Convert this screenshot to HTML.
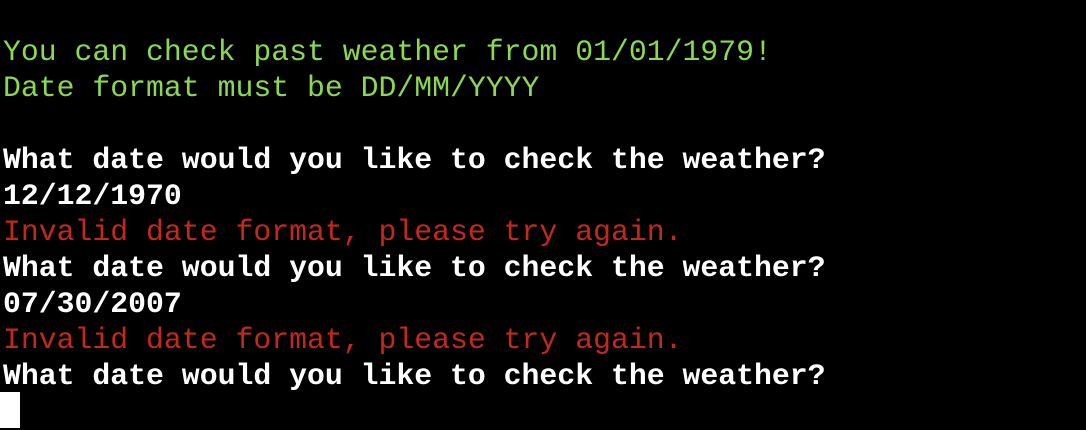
<!DOCTYPE html>
<html><head><style>
html,body{margin:0;padding:0;background:#000;width:1086px;height:430px;overflow:hidden}
.t{position:absolute;left:3px;top:34px;font-family:"Liberation Mono",monospace;font-size:29.8px;line-height:36px;white-space:pre}
.g{color:#8ad94e}.r{color:#c4281c}.w{color:#fff;font-weight:bold}
.c{position:absolute;left:0;top:392px;width:20px;height:36px;background:#fff}
</style></head><body>
<div class="t"><div class="g">You can check past weather from 01/01/1979!</div><div class="g">Date format must be DD/MM/YYYY</div><div> </div><div class="w">What date would you like to check the weather?</div><div class="w">12/12/1970</div><div class="r">Invalid date format, please try again.</div><div class="w">What date would you like to check the weather?</div><div class="w">07/30/2007</div><div class="r">Invalid date format, please try again.</div><div class="w">What date would you like to check the weather?</div></div>
<div class="c"></div>
</body></html>
